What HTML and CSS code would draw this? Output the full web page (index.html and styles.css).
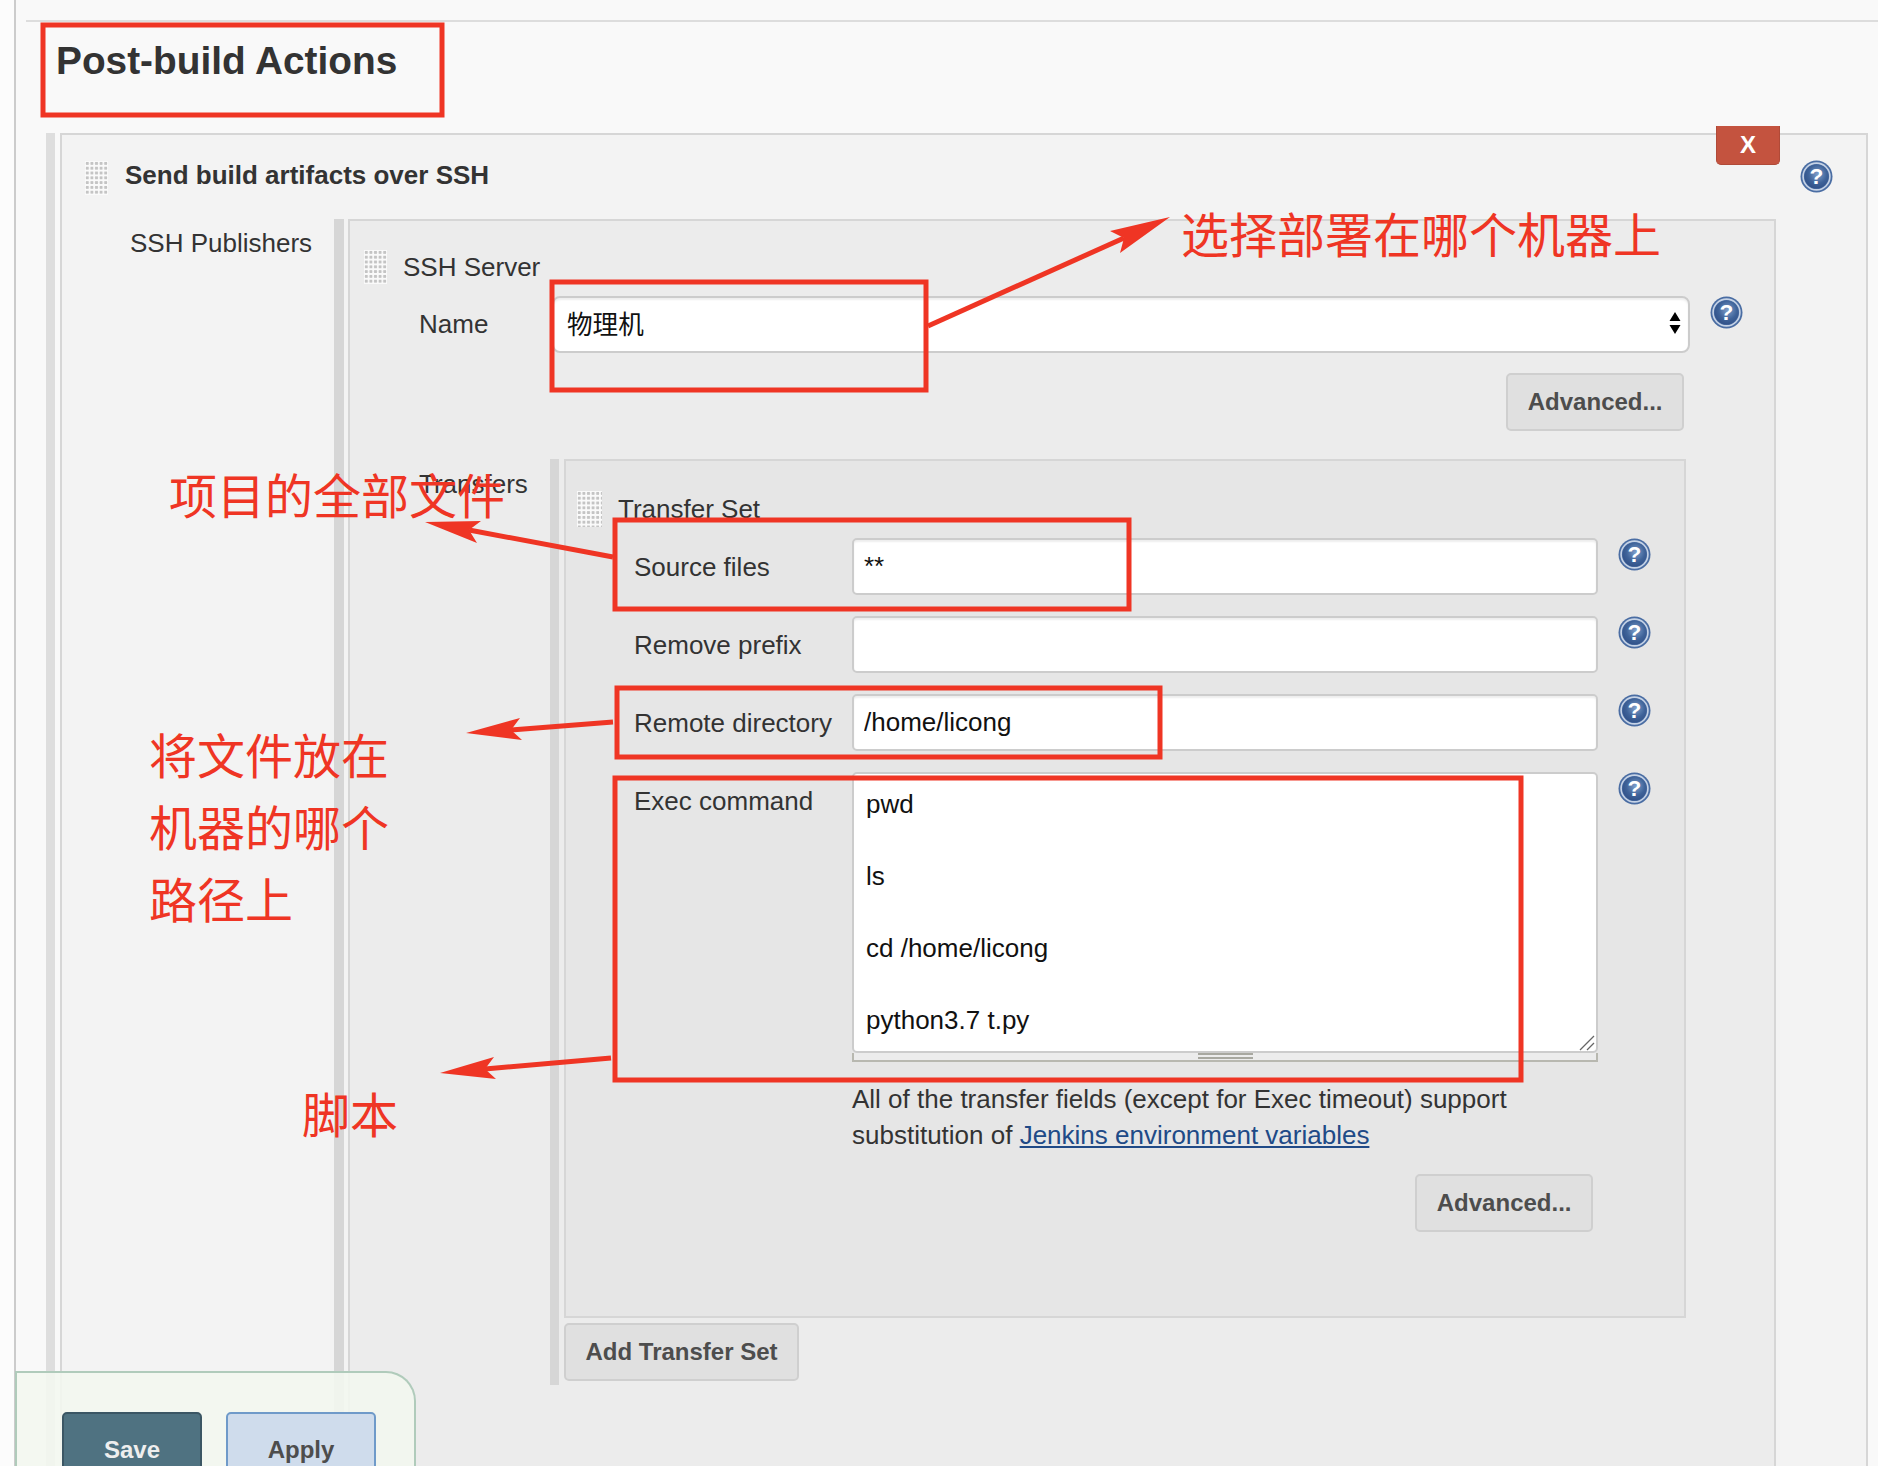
FILE: index.html
```html
<!DOCTYPE html>
<html lang="en">
<head>
    <meta charset="UTF-8">
    <title>Post-build Actions</title>
    <link rel="stylesheet" href="styles.css">
</head>
<body>
    <svg class="defs" width="0" height="0">
        <defs>
            <radialGradient id="help-fill" cx="55%" cy="40%" r="70%">
                <stop offset="0" stop-color="#7f9fcb"/>
                <stop offset="0.55" stop-color="#3f6399"/>
                <stop offset="1" stop-color="#2b4a82"/>
            </radialGradient>
            <symbol id="help-icon" viewBox="0 0 32 32">
                <circle cx="16" cy="16" r="15.5" fill="#4a6da3"/>
                <circle cx="16" cy="16" r="13" fill="none" stroke="#c6d3e6" stroke-width="1.6"/>
                <circle cx="16" cy="16" r="11.6" fill="url(#help-fill)"/>
                <text x="16" y="23.5" class="help-mark">?</text>
            </symbol>
        </defs>
    </svg>

    <div class="page">
        <div class="rule"></div>
        <h1 class="page-title">Post-build Actions</h1>

        <div class="chunk chunk-outer">
            <div class="chunk-body outer-body">
                <button class="delete-btn" type="button">X</button>
                <svg class="help help-top"><use href="#help-icon"/></svg>

                <div class="chunk-head">
                    <div class="grip"></div>
                    <div class="chunk-title strong">Send build artifacts over SSH</div>
                </div>

                <div class="split split-publishers">
                    <div class="side-label publishers-label">SSH Publishers</div>

                    <div class="chunk chunk-server">
                        <div class="chunk-body server-body">
                            <div class="chunk-head">
                                <div class="grip"></div>
                                <div class="chunk-title">SSH Server</div>
                            </div>

                            <div class="name-row">
                                <div class="name-label">Name</div>
                                <div class="select">
                                    <span class="select-value">物理机</span>
                                    <svg class="select-arrows" viewBox="0 0 12 24">
                                        <path d="M6 1 L11.5 10 H0.5 Z M0.5 14 H11.5 L6 23 Z"/>
                                    </svg>
                                </div>
                                <svg class="help"><use href="#help-icon"/></svg>
                            </div>

                            <div class="btn-row server-advanced">
                                <button class="btn" type="button">Advanced...</button>
                            </div>

                            <div class="split split-transfers">
                                <div class="side-label transfers-label">Transfers</div>

                                <div class="chunk chunk-transfer">
                                    <div class="chunk-body transfer-body">
                                        <div class="chunk-head">
                                            <div class="grip grip-tall"></div>
                                            <div class="chunk-title">Transfer Set</div>
                                        </div>

                                        <div class="field">
                                            <label class="field-label">Source files</label>
                                            <input class="text-input" type="text" value="**">
                                            <svg class="help"><use href="#help-icon"/></svg>
                                        </div>
                                        <div class="field">
                                            <label class="field-label">Remove prefix</label>
                                            <input class="text-input" type="text" value="">
                                            <svg class="help"><use href="#help-icon"/></svg>
                                        </div>
                                        <div class="field">
                                            <label class="field-label">Remote directory</label>
                                            <input class="text-input" type="text" value="/home/licong">
                                            <svg class="help"><use href="#help-icon"/></svg>
                                        </div>
                                        <div class="field field-top">
                                            <label class="field-label">Exec command</label>
                                            <div class="code-box">
                                                <textarea class="code-input" spellcheck="false">pwd

ls

cd /home/licong

python3.7 t.py</textarea>
                                                <svg class="code-resizer" viewBox="0 0 16 16">
                                                    <path d="M1 15 L15 1 M8 15 L15 8"/>
                                                </svg>
                                                <div class="code-drag"><span></span></div>
                                            </div>
                                            <svg class="help"><use href="#help-icon"/></svg>
                                        </div>

                                        <p class="note">All of the transfer fields (except for Exec timeout) support<br>substitution of <a href="#">Jenkins environment variables</a></p>

                                        <div class="btn-row transfer-advanced">
                                            <button class="btn" type="button">Advanced...</button>
                                        </div>
                                    </div>
                                    <button class="btn add-btn" type="button">Add Transfer Set</button>
                                </div>
                            </div>
                        </div>
                    </div>
                </div>
            </div>
        </div>
    </div>

    <div class="bottom-bar">
        <button class="btn-save" type="button">Save</button>
        <button class="btn-apply" type="button">Apply</button>
    </div>

    <!-- red annotations drawn over the screenshot -->
    <svg class="marks" viewBox="0 0 1878 1466">
        <g class="mark-boxes">
            <rect x="43" y="25" width="399" height="90"/>
            <rect x="552" y="282" width="374" height="108"/>
            <rect x="615" y="520" width="514" height="89"/>
            <rect x="617" y="688" width="543" height="69"/>
            <rect x="615" y="778" width="906" height="302"/>
        </g>
        <g class="mark-lines">
            <line x1="928" y1="326" x2="1124" y2="238"/>
            <line x1="613" y1="557" x2="469" y2="530"/>
            <line x1="613" y1="722" x2="511" y2="730"/>
            <line x1="611" y1="1058" x2="485" y2="1069"/>
        </g>
        <g class="mark-heads">
            <polygon points="1170,217 1120,253 1124,238 1110,231"/>
            <polygon points="425,522 481,521 469,530 477,543"/>
            <polygon points="466,733 522,740 511,730 520,718"/>
            <polygon points="440,1073 496,1079 485,1069 494,1057"/>
        </g>
    </svg>

    <div class="note-red note-deploy">选择部署在哪个机器上</div>
    <div class="note-red note-files">项目的全部文件</div>
    <div class="note-red note-path">将文件放在<br>机器的哪个<br>路径上</div>
    <div class="note-red note-script">脚本</div>
</body>
</html>
```

FILE: styles.css
```css
:root {
    --text-color: #333;
    --button-text: #4d4d4d;
    --red: #ef3524;
}

* {
    box-sizing: border-box;
}

html, body {
    margin: 0;
    height: 1466px;
    overflow: hidden;
}

body {
    position: relative;
    font-family: "Liberation Sans", Arial, sans-serif;
    font-size: 26px;
    line-height: 30px;
    color: var(--text-color);
    background-color: #fcfcfc;
}

.defs {
    position: absolute;
}

.page {
    margin-left: 14px;
    height: 1466px;
    padding-top: 20px;
    border-left: 2px solid #ccc;
    background-color: #f9f9f9;
}

.rule {
    height: 2px;
    margin-left: 10px;
    background-color: #ddd;
}

.page-title {
    margin: 16px 0 0 40px;
    height: 95px;
    font-size: 38.8px;
    line-height: 46px;
    font-weight: bold;
}

/* nested blocks: grey handle on the left, bordered panel on the right */
.chunk {
    display: flex;
    flex-direction: column;
}

.chunk-outer {
    margin-left: 30px;
    padding-left: 5px;
    border-left: 9px solid #dedede;
}

.chunk-body {
    border: 2px solid #d6d6d6;
}

.outer-body {
    position: relative;
    height: 1400px;
    margin-right: 10px;
    padding: 25px 0 0 23px;
    border-right-width: 2px;
    background-color: #f3f3f3;
}

.chunk-head {
    display: flex;
    align-items: center;
    gap: 16px;
}

.grip {
    flex: none;
    width: 23px;
    height: 34px;
    background-color: #fafafa;
    background-image: radial-gradient(circle, #c4c4c4 1.4px, transparent 1.9px);
    background-size: 4.6px 4.8px;
}

.grip-tall {
    width: 25px;
    height: 36px;
}

.chunk-title {
    line-height: 30px;
}

.strong {
    margin-left: 1px;
    padding-bottom: 5px;
    font-weight: bold;
}

.split {
    display: flex;
}

.side-label {
    flex: none;
}

.split-publishers {
    margin-top: 24px;
}

.publishers-label {
    width: 249px;
    padding: 9px 0 0 45px;
}

.chunk-server {
    flex: 1;
    padding-left: 4px;
    margin-right: 90px;
    border-left: 10px solid #d6d6d6;
}

.server-body {
    height: 1300px;
    padding: 29px 0 0 14px;
    background-color: #ececec;
}

.name-row {
    display: flex;
    align-items: flex-start;
    margin-top: 12px;
}

.name-label {
    width: 188px;
    padding: 13px 0 0 55px;
}

.select {
    display: flex;
    align-items: center;
    justify-content: space-between;
    width: 1138px;
    height: 57px;
    padding: 0 7px 3px 13px;
    border: 2px solid #ccc;
    border-radius: 8px;
    background-color: #fff;
    box-shadow: inset 0 2px 2px #eee;
}

.select-value {
    font-family: "Noto Sans CJK SC", sans-serif;
    font-size: 25.6px;
    color: #111;
}

.select-arrows {
    width: 12px;
    height: 24px;
    fill: #000;
}

.help {
    flex: none;
    width: 33px;
    height: 33px;
    margin-left: 20px;
}

.help-top {
    position: absolute;
    top: 25px;
    left: 1738px;
    margin: 0;
}

.help-mark {
    font-family: "Liberation Sans", sans-serif;
    font-size: 22px;
    font-weight: bold;
    fill: #fff;
    text-anchor: middle;
}

.delete-btn {
    position: absolute;
    top: -9px;
    left: 1654px;
    width: 64px;
    height: 39px;
    border: 1px solid #b04a38;
    border-top: none;
    border-radius: 0 0 5px 5px;
    background-color: #c4533f;
    color: #fff;
    font-family: inherit;
    font-size: 24px;
    font-weight: bold;
}

.btn-row {
    display: flex;
    justify-content: flex-end;
}

.server-advanced {
    width: 1320px;
    margin-top: 20px;
}

.btn {
    height: 58px;
    padding: 0 19.5px;
    border: 2px solid #cfcfcf;
    border-radius: 5px;
    background-color: #e0e0e0;
    color: var(--button-text);
    font-family: inherit;
    font-size: 24px;
    font-weight: bold;
}

.split-transfers {
    margin-top: 28px;
}

.transfers-label {
    width: 186px;
    padding: 10px 0 0 55px;
}

.chunk-transfer {
    width: 1136px;
    padding-left: 5px;
    border-left: 9px solid #d6d6d6;
}

.transfer-body {
    height: 859px;
    padding: 30px 0 0 11px;
    background-color: #e6e6e6;
}

.field {
    display: flex;
    align-items: flex-start;
    margin-top: 21px;
}

.chunk-head + .field {
    margin-top: 11px;
}

.field-label {
    flex: none;
    width: 275px;
    padding: 14px 0 0 57px;
}

.field-top .field-label {
    padding-top: 14px;
}

.text-input {
    width: 746px;
    height: 57px;
    padding: 0 10px;
    border: 2px solid #ccc;
    border-radius: 5px;
    background-color: #fff;
    box-shadow: inset 0 2px 2px #eee;
    color: #111;
    font-family: inherit;
    font-size: 26px;
    outline: none;
}

.code-box {
    position: relative;
    width: 746px;
}

.code-input {
    display: block;
    width: 746px;
    height: 281px;
    padding: 12px 12px 0;
    border: 2px solid #ccc;
    border-radius: 5px;
    background-color: #fff;
    color: #111;
    font-family: inherit;
    font-size: 26px;
    line-height: 36px;
    outline: none;
    resize: none;
}

.code-resizer {
    position: absolute;
    right: 3px;
    top: 263px;
    width: 16px;
    height: 16px;
    fill: none;
    stroke: #666;
    stroke-width: 1.3;
}

.code-drag {
    display: flex;
    justify-content: center;
    height: 9px;
    border: 2px solid #b8b8b0;
    border-top: none;
    background-color: #ececec;
}

.code-drag span {
    width: 55px;
    height: 6px;
    border-top: 2px solid #a8a8a0;
    border-bottom: 2px solid #a8a8a0;
}

.note {
    margin: 19px 0 0 275px;
    line-height: 36px;
}

.note a {
    color: #204a87;
}

.transfer-advanced {
    width: 1016px;
    margin-top: 21px;
}

.add-btn {
    align-self: flex-start;
    width: 235px;
    margin: 5px 0 4px;
    padding: 0;
}

/* sticky save bar lies over the panels */
.bottom-bar {
    position: absolute;
    left: 15px;
    top: 1371px;
    display: flex;
    gap: 24px;
    width: 401px;
    height: 120px;
    padding: 39px 0 0 45px;
    border: 2px solid #b0cbbb;
    border-bottom: none;
    border-radius: 0 30px 0 0;
    background-color: rgba(243, 247, 240, 0.9);
}

.btn-save, .btn-apply {
    height: 75px;
    border-radius: 5px;
    font-family: inherit;
    font-size: 24px;
    font-weight: bold;
}

.btn-save {
    width: 140px;
    border: 2px solid #3b5664;
    background-color: #4f7281;
    color: #eee;
}

.btn-apply {
    width: 150px;
    border: 2px solid #6f9ac9;
    background-color: #cfdcec;
    color: var(--button-text);
}

/* annotations */
.marks {
    position: absolute;
    top: 0;
    left: 0;
    width: 1878px;
    height: 1466px;
    pointer-events: none;
}

.mark-boxes rect {
    fill: none;
    stroke: var(--red);
    stroke-width: 5;
}

.mark-lines line {
    stroke: var(--red);
    stroke-width: 5;
}

.mark-heads polygon {
    fill: var(--red);
}

.note-red {
    position: absolute;
    font-family: "Noto Sans CJK SC", sans-serif;
    font-size: 48px;
    line-height: 72px;
    color: var(--red);
}

.note-deploy {
    left: 1181px;
    top: 196px;
}

.note-files {
    left: 169px;
    top: 457px;
}

.note-path {
    left: 149px;
    top: 717px;
}

.note-script {
    left: 302px;
    top: 1076px;
}
```
